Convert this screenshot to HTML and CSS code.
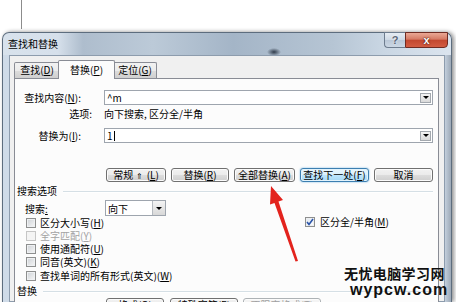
FILE: index.html
```html
<!DOCTYPE html>
<html lang="zh-CN">

<head>
    <meta charset="UTF-8">
    <meta name="viewport" content="width=device-width, initial-scale=1.0">
    <link rel="stylesheet" href="styles.css">
</head>

<body>
    <div class="desk-top">
        <div class="doc-line"></div>
    </div>

    <div class="window">
        <div class="titlebar">
            <span class="title">查找和替换</span>
            <div class="caption">
                <span class="cap help">?</span>
                <span class="cap close">x</span>
            </div>
        </div>

        <div class="client">
            <div class="tabs">
                <span class="tab tab-find">查找(<u>D</u>)</span>
                <span class="tab tab-replace active">替换(<u>P</u>)</span>
                <span class="tab tab-goto">定位(<u>G</u>)</span>
            </div>

            <div class="panel">
                <div class="field first">
                    <span class="label">查找内容(<u>N</u>):</span>
                    <div class="input">
                        <span>^m</span>
                        <span class="drop"></span>
                    </div>
                </div>
                <div class="field options">
                    <span class="label label-opt">选项:</span>
                    <span>向下搜索, 区分全/半角</span>
                </div>
                <div class="field second">
                    <span class="label">替换为(<u>I</u>):</span>
                    <div class="input">
                        <span>1<span class="caret"></span></span>
                        <span class="drop"></span>
                    </div>
                </div>

                <div class="btn-row">
                    <span class="btn btn-less"><span>常规 <small>⇑</small> (<u>L</u>)</span></span>
                    <span class="btn btn-replace"><span>替换(<u>R</u>)</span></span>
                    <span class="btn btn-all"><span>全部替换(<u>A</u>)</span></span>
                    <span class="btn btn-next default"><span>查找下一处(<u>F</u>)</span></span>
                    <span class="btn btn-cancel"><span>取消</span></span>
                </div>

                <div class="group-head">
                    <span>搜索选项</span>
                    <span class="rule"></span>
                </div>

                <div class="search-row">
                    <span class="label-search">搜索<u>:</u></span>
                    <div class="select">
                        <span>向下</span>
                        <span class="select-btn"></span>
                    </div>
                </div>

                <div class="check-area">
                    <div class="check-col">
                        <div class="check-row"><span class="box"></span><span>区分大小写(<u>H</u>)</span></div>
                        <div class="check-row disabled"><span class="box"></span><span>全字匹配(<u>Y</u>)</span></div>
                        <div class="check-row"><span class="box"></span><span>使用通配符(<u>U</u>)</span></div>
                        <div class="check-row"><span class="box"></span><span>同音(英文)(<u>K</u>)</span></div>
                        <div class="check-row"><span class="box"></span><span>查找单词的所有形式(英文)(<u>W</u>)</span></div>
                    </div>
                    <div class="check-col right">
                        <div class="check-row">
                            <span class="box checked">
                                <svg width="8" height="8" viewBox="0 0 8 8"><path d="M1 4 L3 6.5 L7 1" fill="none" stroke="#2a53a8" stroke-width="1.6"/></svg>
                            </span>
                            <span>区分全/半角(<u>M</u>)</span>
                        </div>
                    </div>
                </div>

                <div class="group-head replace-head">
                    <span>替换</span>
                    <span class="rule"></span>
                </div>

                <div class="btn-row bottom">
                    <span class="btn btn-format"><span>格式(<u>O</u>)</span></span>
                    <span class="btn btn-special"><span>特殊字符(<u>E</u>)</span></span>
                    <span class="btn btn-noformat off"><span>不限定格式(<u>T</u>)</span></span>
                </div>
            </div>
        </div>
    </div>

    <div class="watermark">
        <div class="wm-cn">无忧电脑学习网</div>
        <div class="wm-en">wypcw.com</div>
    </div>

    <svg class="arrow" width="456" height="302" viewBox="0 0 456 302">
        <polygon points="271,186 283,200 278.5,201.5 298,261 295.5,261.5 274.5,203 270,204.5" fill="#e3231d"/>
    </svg>
</body>

</html>
```

FILE: styles.css
```css
* {
    box-sizing: border-box;
}

body {
    margin: 0;
    width: 456px;
    height: 302px;
    overflow: hidden;
    position: relative;
    background-color: #ffffff;
    font-family: "Noto Sans CJK SC", "Liberation Sans", sans-serif;
    font-size: 10px;
    line-height: 13px;
    color: #000;
}

u {
    text-decoration: underline;
}

/* bit of the document behind the dialog */
.desk-top {
    height: 32px;
    padding-left: 21px;
}

.doc-line {
    width: 1px;
    height: 29px;
    background-color: #8c8c8c;
}

/* window frame */
.window {
    margin-left: 2px;
    width: 450px;
    height: 270px;
    border: 1px solid #5d6d7e;
    border-bottom: none;
    border-radius: 7px 7px 0 0;
    box-shadow: 2px 0 4px rgba(0, 0, 0, 0.45);
    background:
        radial-gradient(ellipse 7px 4px at 271px 19px, rgba(25, 35, 50, 0.85), rgba(25, 35, 50, 0)) no-repeat,
        linear-gradient(to right, #d8e2ec 0, #d6e0eb 55px, #aebdcd 80px, #bccad8 150px, #a4b5c7 230px, #b6c5d4 330px, #c9d6e3 380px, #dbe4ee 446px) top / 100% 22px no-repeat,
        linear-gradient(to right, #cfdbe8 0, #cfdbe8 440px, #9da9b7 448px);
}

.titlebar {
    display: flex;
    align-items: flex-start;
    height: 22px;
    padding-left: 5px;
}

.title {
    line-height: 22px;
    font-size: 10px;
}

.caption {
    display: flex;
    margin-left: auto;
    margin-right: 3px;
    margin-top: -1px;
}

.cap {
    height: 16px;
    display: flex;
    align-items: center;
    justify-content: center;
    font-family: "Liberation Sans", sans-serif;
    font-weight: bold;
}

.help {
    width: 21px;
    border: 1px solid #6d7c8e;
    border-right: none;
    border-radius: 0 0 0 4px;
    background: linear-gradient(#e6ecf3, #cdd8e4 50%, #b9c7d7 51%, #cbd7e4);
    color: #5a6676;
    font-size: 11px;
    text-shadow: 0 0 2px #fff;
}

.close {
    width: 43px;
    border: 1px solid #6f2b22;
    border-radius: 0 0 4px 0;
    background: linear-gradient(#eaa895, #d57a64 45%, #c2472f 50%, #d35c42);
    color: #fff;
    font-size: 11px;
    text-shadow: 0 0 2px #4a1208, 0 0 1px #4a1208;
}

/* client area */
.client {
    margin: 0 6px;
    height: 247px;
    border: 1px solid #8d9cad;
    background-color: #f0f0f0;
    padding: 4px 0 0 4px;
}

.tabs {
    display: flex;
    align-items: flex-end;
    height: 18px;
}

.tab {
    height: 16px;
    border: 1px solid #898c95;
    border-bottom: none;
    border-radius: 2px 2px 0 0;
    background: linear-gradient(#f2f2f2, #ebebeb 50%, #dddddd 51%, #cfcfcf);
    text-align: center;
    line-height: 14px;
}

.tab-find {
    width: 46px;
}

.tab-goto {
    width: 44px;
}

.tab-replace {
    width: 57px;
}

.tab.active {
    position: relative;
    z-index: 1;
    height: 19px;
    margin: 0 -2px -1px;
    background: #fcfcfc;
    line-height: 17px;
}

.panel {
    width: 425px;
    height: 225px;
    border: 1px solid #898c95;
    background-color: #fcfcfc;
}

/* find / replace fields */
.field {
    display: grid;
    grid-template-columns: 89px 329px;
    align-items: center;
}

.field.first {
    margin-top: 11px;
}

.field.options {
    height: 14px;
    margin-top: 1px;
}

.field.second {
    margin-top: 8px;
}

.label {
    text-align: right;
    padding-right: 23px;
}

.label-opt {
    padding-right: 12px;
}

.input {
    height: 15px;
    border: 1px solid #9ea5ae;
    background-color: #fff;
    display: flex;
    align-items: center;
    padding-left: 2px;
}

.caret {
    display: inline-block;
    width: 1px;
    height: 10px;
    margin-left: 1px;
    vertical-align: -1px;
    background-color: #000;
}

.drop {
    margin-left: auto;
    margin-right: 1px;
    width: 11px;
    height: 10px;
    border: 1px solid #a3a8ae;
    background: linear-gradient(#f4f4f4, #d9d9d9);
    display: flex;
    align-items: center;
    justify-content: center;
}

.drop::after,
.select-btn::after {
    content: "";
    border-left: 3px solid transparent;
    border-right: 3px solid transparent;
    border-top: 3px solid #000;
}

/* push buttons */
.btn-row {
    display: flex;
    gap: 5px;
    margin: 25px 0 0 91px;
}

.btn {
    height: 14px;
    border: 1px solid #707070;
    border-radius: 3px;
    background: linear-gradient(#f2f2f2, #ebebeb 50%, #dddddd 51%, #cfcfcf);
    box-shadow: inset 0 0 0 1px #fbfbfb;
    display: flex;
    align-items: center;
    justify-content: center;
    line-height: 12px;
    white-space: nowrap;
}

.btn small {
    font-size: 8px;
    margin: 0 1px;
}

.btn-less {
    width: 60px;
}

.btn-replace {
    width: 58px;
}

.btn-all {
    width: 61px;
}

.btn-next {
    width: 69px;
}

.btn-cancel {
    width: 59px;
}

.btn.default {
    border-color: #3c7fb1;
    background: linear-gradient(#eaf6fd, #d9f0fc 50%, #bee6fd 51%, #a7d9f5);
    box-shadow: inset 0 0 0 1px #e2f3fc, 0 0 2px #6fb3e0;
}

.btn-row.bottom {
    margin-top: 1px;
}

.btn-format {
    width: 58px;
    margin-right: 1px;
}

.btn-special {
    width: 68px;
}

.btn-noformat {
    width: 78px;
}

.btn.off {
    border-color: #adb2b5;
    background: #f4f4f4;
    color: #a0a0a0;
}

/* option groups */
.group-head {
    display: flex;
    align-items: center;
    gap: 6px;
    height: 14px;
    margin-top: 1px;
    padding-left: 2px;
}

.rule {
    flex: 1;
    height: 2px;
    margin-top: 3px;
    margin-right: 5px;
    border-top: 1px solid #d5dfe5;
    border-bottom: 1px solid #ffffff;
}

.replace-head {
    margin-top: 1px;
}

.search-row {
    display: grid;
    grid-template-columns: 90px 61px;
    align-items: center;
    margin-top: 3px;
}

.label-search {
    padding-left: 10px;
}

.select {
    height: 16px;
    border: 1px solid #9ea5ae;
    background-color: #fff;
    display: flex;
    align-items: center;
    padding-left: 2px;
}

.select-btn {
    margin-left: auto;
    width: 13px;
    height: 14px;
    border-left: 1px solid #b5bac0;
    background: linear-gradient(#f4f4f4, #d8d8d8);
    display: flex;
    align-items: center;
    justify-content: center;
}

.check-area {
    display: grid;
    grid-template-columns: 290px 1fr;
}

.check-col {
    padding-left: 11px;
}

.check-col.right {
    padding-left: 0;
}

.check-row {
    display: flex;
    align-items: center;
    gap: 4px;
    height: 13.25px;
    line-height: 12px;
    white-space: nowrap;
}

.check-col.right .check-row {
    gap: 5px;
    margin-top: -1px;
}

.box {
    width: 10px;
    height: 10px;
    border: 1px solid #8e8f8f;
    background: linear-gradient(135deg, #cdd1d6, #f7f7f7);
    box-shadow: inset 0 0 0 1px #eef0f2;
    display: flex;
    align-items: center;
    justify-content: center;
}

.box.checked {
    background: linear-gradient(135deg, #dfe6ee, #ffffff);
}

.check-row.disabled {
    color: #a3a3a3;
}

.check-row.disabled .box {
    border-color: #c6c6c6;
    background: #f4f4f4;
    box-shadow: none;
}

/* overlays on the screenshot */
.watermark {
    position: absolute;
    left: 344px;
    top: 265px;
    font-weight: bold;
    color: #111;
}

.wm-cn {
    font-size: 14px;
    line-height: 17px;
    letter-spacing: 0.4px;
}

.wm-en {
    font-family: "Liberation Sans", sans-serif;
    font-size: 16px;
    line-height: 16px;
    letter-spacing: 1px;
    padding-left: 6px;
}

.arrow {
    position: absolute;
    left: 0;
    top: 0;
    pointer-events: none;
}
```
